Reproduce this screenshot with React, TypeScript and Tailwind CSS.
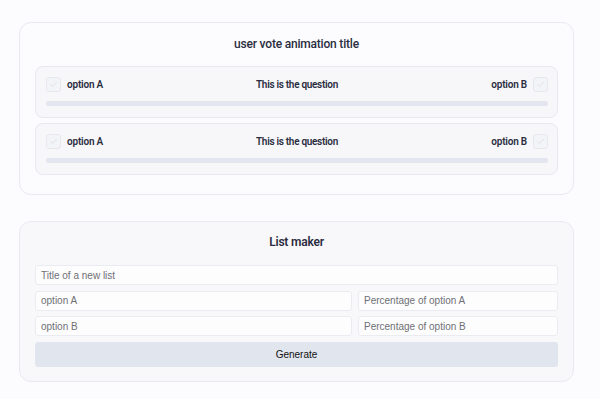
import React from "react";

const font = { fontFamily: 'Roboto, "Noto Sans", sans-serif' };

function Check() {
  return (
    <div className="w-[15px] h-[15px] shrink-0 rounded-[3px] border border-[#e7e8ee] bg-[#f3f4f7] flex items-center justify-center">
      <svg width="9" height="9" viewBox="0 0 24 24" fill="none" stroke="#dcdfe6" strokeWidth="2.5" strokeLinecap="round" strokeLinejoin="round">
        <path d="M20 6 9 17l-5-5" />
      </svg>
    </div>
  );
}

function VoteRow() {
  return (
    <div className="h-[52px] rounded-lg border border-[#e8e9f0] bg-[#f7f7fa] pl-[10px] pr-[9px] pt-[9px]">
      <div className="flex items-center justify-between h-[16px]">
        <div className="flex items-center gap-[6px] w-[120px]">
          <Check />
          <span className="text-[10px] font-semibold text-[#2a2d40] tracking-[-0.2px]">option A</span>
        </div>
        <span className="text-[10px] font-semibold text-[#2a2d40] tracking-[-0.3px]">This is the question</span>
        <div className="flex items-center justify-end gap-[6px] w-[120px]">
          <span className="text-[10px] font-semibold text-[#2a2d40] tracking-[-0.2px]">option B</span>
          <Check />
        </div>
      </div>
      <div className="mt-[9px] h-[5px] rounded-full bg-[#e3e5ef]" />
    </div>
  );
}

function Field({ placeholder, className = "" }: { placeholder: string; className?: string }) {
  return (
    <input
      placeholder={placeholder}
      className={`h-[20px] rounded-[3px] border border-[#ebecf1] bg-[#fdfdfe] px-[5px] text-[10px] text-[#333] placeholder:text-[#6f7075] outline-none ${className}`}
      style={{ fontFamily: '"Liberation Sans", Arial, sans-serif' }}
    />
  );
}

export default function App() {
  return (
    <div className="w-[600px] h-[399px] bg-[#fcfcfe] pt-[22px]" style={font}>
      <div className="ml-[19px] w-[555px] rounded-xl border border-[#e9eaef] bg-[#fcfcfe] px-[15px] pt-[12px] pb-[19px]">
        <h1 className="text-center text-[12px] font-medium leading-[18px] text-[#2a2d40] tracking-[-0.2px]">user vote animation title</h1>
        <div className="mt-[13px] flex flex-col gap-[5px]">
          <VoteRow />
          <VoteRow />
        </div>
      </div>
      <div className="mt-[26px] ml-[19px] w-[555px] rounded-xl border border-[#e9eaef] bg-[#f8f8fb] px-[15px] pt-[10px] pb-[14px]">
        <h2 className="text-center text-[12px] font-semibold leading-[20px] text-[#2a2d40] tracking-[-0.2px]">List maker</h2>
        <div className="mt-[13px] flex flex-col gap-[5.5px]">
          <Field placeholder="Title of a new list" className="w-full" />
          <div className="flex gap-[6px]">
            <Field placeholder="option A" className="flex-1 min-w-0" />
            <Field placeholder="Percentage of option A" className="w-[200px]" />
          </div>
          <div className="flex gap-[6px]">
            <Field placeholder="option B" className="flex-1 min-w-0" />
            <Field placeholder="Percentage of option B" className="w-[200px]" />
          </div>
          <button
            className="h-[25px] w-full rounded-[3px] bg-[#e1e5ed] text-[10px] text-[#111]"
            style={{ fontFamily: '"Liberation Sans", Arial, sans-serif' }}
          >
            Generate
          </button>
        </div>
      </div>
    </div>
  );
}
